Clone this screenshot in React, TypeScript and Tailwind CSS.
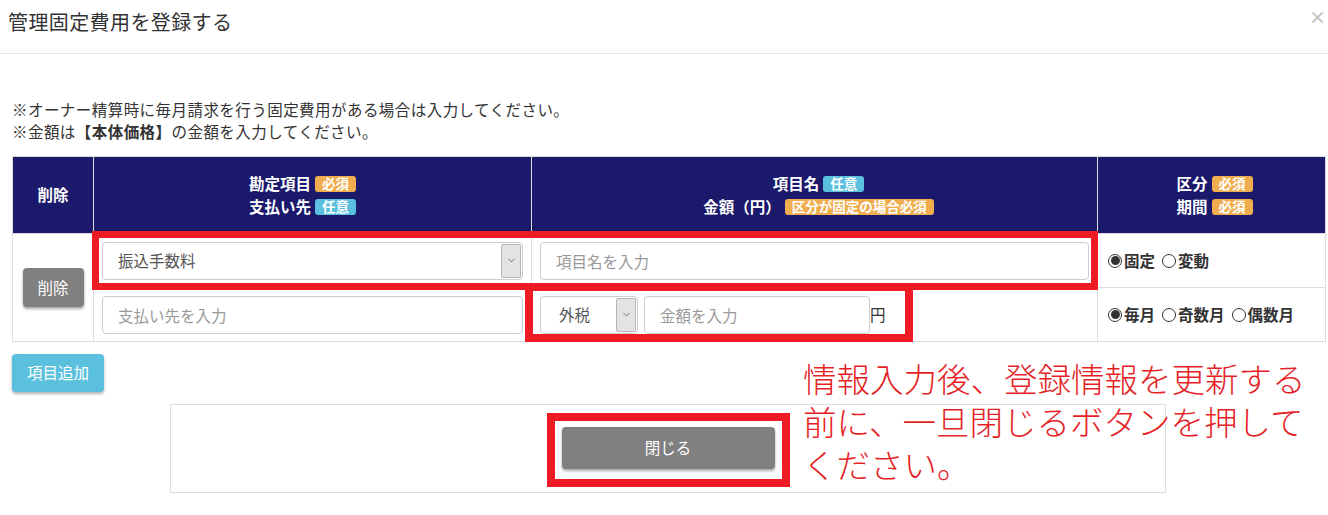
import { ChevronDown } from "lucide-react";

const Badge = ({ kind, children }: { kind: "req" | "opt"; children: React.ReactNode }) => (
  <span
    className={
      "inline-flex items-center h-[16px] px-[7px] rounded-[3px] text-[13.5px] leading-none font-bold text-white " +
      (kind === "req" ? "bg-[#f0ad4e]" : "bg-[#5bc0de]")
    }
  >
    {children}
  </span>
);

const HeadLine = ({ children }: { children: React.ReactNode }) => (
  <div className="flex items-center justify-center gap-[4px] h-[23px]">{children}</div>
);

const FakeSelect = ({ value, className }: { value: string; className?: string }) => (
  <div className={"flex h-[38px] border border-[#ccc] rounded-[4px] bg-white overflow-hidden " + (className ?? "")}>
    <div className="flex-1 flex items-center text-[#555]">{value}</div>
    <div className="w-[20px] m-[1px] flex items-center justify-center bg-[#e3e3e3] border border-[#b5b5b5] rounded-[2px]">
      <ChevronDown size={11} strokeWidth={1.5} className="text-[#444]" />
    </div>
  </div>
);

const TextInput = ({ placeholder, className }: { placeholder: string; className?: string }) => (
  <input
    placeholder={placeholder}
    className={
      "h-[38px] border border-[#ccc] rounded-[4px] px-[15px] outline-none placeholder:text-[#999] text-[#555] " +
      (className ?? "")
    }
  />
);

const Radio = ({ checked, label }: { checked?: boolean; label: string }) => (
  <span className="flex items-center gap-[2px]">
    <span className="w-[14px] h-[14px] rounded-full border border-[#333] flex items-center justify-center bg-white">
      {checked && <span className="w-[9px] h-[9px] rounded-full bg-[#333]" />}
    </span>
    <span className="font-bold text-[#333]">{label}</span>
  </span>
);

export default function App() {
  return (
    <div className="relative w-[1328px] h-[515px] overflow-hidden bg-white text-[15.5px] text-[#333] font-['Noto_Sans_CJK_JP','Noto_Sans',sans-serif]">
      <div className="h-[54px] border-b border-[#e5e5e5] flex items-start justify-between pl-[8px] pr-[2px]">
        <h4 className="pt-[12px] text-[20px] leading-[20px] tracking-[0.4px] text-[#333]">管理固定費用を登録する</h4>
        <span className="pt-[7px] text-[17px] leading-[20px] font-bold text-[#c4c4c4]">×</span>
      </div>

      <div className="px-[12px] pt-[44px]">
        <div className="leading-[22px] tracking-[0.45px]">
          <p>※オーナー精算時に毎月請求を行う固定費用がある場合は入力してください。</p>
          <p>
            ※金額は<span className="font-bold">【本体価格】</span>の金額を入力してください。
          </p>
        </div>

        <table className="mt-[14px] table-fixed border-collapse w-[1313px]">
          <colgroup>
            <col className="w-[81px]" />
            <col className="w-[438px]" />
            <col className="w-[566px]" />
            <col className="w-[228px]" />
          </colgroup>
          <thead>
            <tr className="bg-[#1a196c] text-white font-bold h-[77px]">
              <th className="border border-[#dcdcdc] p-0">削除</th>
              <th className="border border-[#dcdcdc] p-0 pr-[20px]">
                <HeadLine>
                  勘定項目 <Badge kind="req">必須</Badge>
                </HeadLine>
                <HeadLine>
                  支払い先 <Badge kind="opt">任意</Badge>
                </HeadLine>
              </th>
              <th className="border border-[#dcdcdc] p-0 pl-[8px]">
                <HeadLine>
                  項目名 <Badge kind="opt">任意</Badge>
                </HeadLine>
                <HeadLine>
                  金額（円） <Badge kind="req">区分が固定の場合必須</Badge>
                </HeadLine>
              </th>
              <th className="border border-[#dcdcdc] p-0 pl-[6px]">
                <HeadLine>
                  区分 <Badge kind="req">必須</Badge>
                </HeadLine>
                <HeadLine>
                  期間 <Badge kind="req">必須</Badge>
                </HeadLine>
              </th>
            </tr>
          </thead>
          <tbody>
            <tr className="h-[54px]">
              <td rowSpan={2} className="border border-[#ddd] p-0">
                <div className="flex justify-center">
                  <button className="w-[61px] h-[39px] rounded-[4px] bg-[#808080] text-white shadow-[0_2px_3px_rgba(0,0,0,0.35)]">
                    削除
                  </button>
                </div>
              </td>
              <td className="border border-[#ddd] px-[8px] py-0">
                <FakeSelect value="振込手数料" className="pl-[15px]" />
              </td>
              <td className="border border-[#ddd] px-[8px] py-0">
                <TextInput placeholder="項目名を入力" className="w-full" />
              </td>
              <td className="border border-[#ddd] pl-[10px] py-0">
                <div className="flex items-center gap-[7px]">
                  <Radio checked label="固定" />
                  <Radio label="変動" />
                </div>
              </td>
            </tr>
            <tr className="h-[54px]">
              <td className="border border-[#ddd] px-[8px] py-0">
                <TextInput placeholder="支払い先を入力" className="w-full" />
              </td>
              <td className="border border-[#ddd] px-[8px] py-0">
                <div className="flex items-center">
                  <FakeSelect value="外税" className="w-[98px] pl-[18px]" />
                  <TextInput placeholder="金額を入力" className="ml-[6px] w-[226px]" />
                  <span>円</span>
                </div>
              </td>
              <td className="border border-[#ddd] pl-[10px] py-0">
                <div className="flex items-center gap-[7px]">
                  <Radio checked label="毎月" />
                  <Radio label="奇数月" />
                  <Radio label="偶数月" />
                </div>
              </td>
            </tr>
          </tbody>
        </table>

        <button className="mt-[12px] w-[92px] h-[38px] rounded-[4px] bg-[#5bc0de] text-white shadow-[0_2px_3px_rgba(0,0,0,0.3)]">
          項目追加
        </button>

        <div className="mt-[12px] ml-[158px] w-[996px] h-[89px] border border-[#ddd] flex justify-center pt-[22px]">
          <button className="w-[213px] h-[42px] rounded-[4px] bg-[#808080] text-white shadow-[0_2px_3px_rgba(0,0,0,0.35)]">
            閉じる
          </button>
        </div>
      </div>

      {/* annotation overlays */}
      <div className="absolute left-[92px] top-[231px] w-[1006px] h-[59px] border-[7px] border-[#ed1c24] pointer-events-none" />
      <div className="absolute left-[525px] top-[283px] w-[388px] h-[59px] border-[8px] border-[#ed1c24] pointer-events-none" />
      <div className="absolute left-[547px] top-[413px] w-[243px] h-[74px] border-[8px] border-[#ed1c24] pointer-events-none" />
      <div className="absolute left-[803px] top-[356px] text-[33.5px] leading-[43px] font-light text-[#e61e25] whitespace-nowrap">
        情報入力後、登録情報を更新する
        <br />
        前に、一旦閉じるボタンを押して
        <br />
        ください。
      </div>
    </div>
  );
}
